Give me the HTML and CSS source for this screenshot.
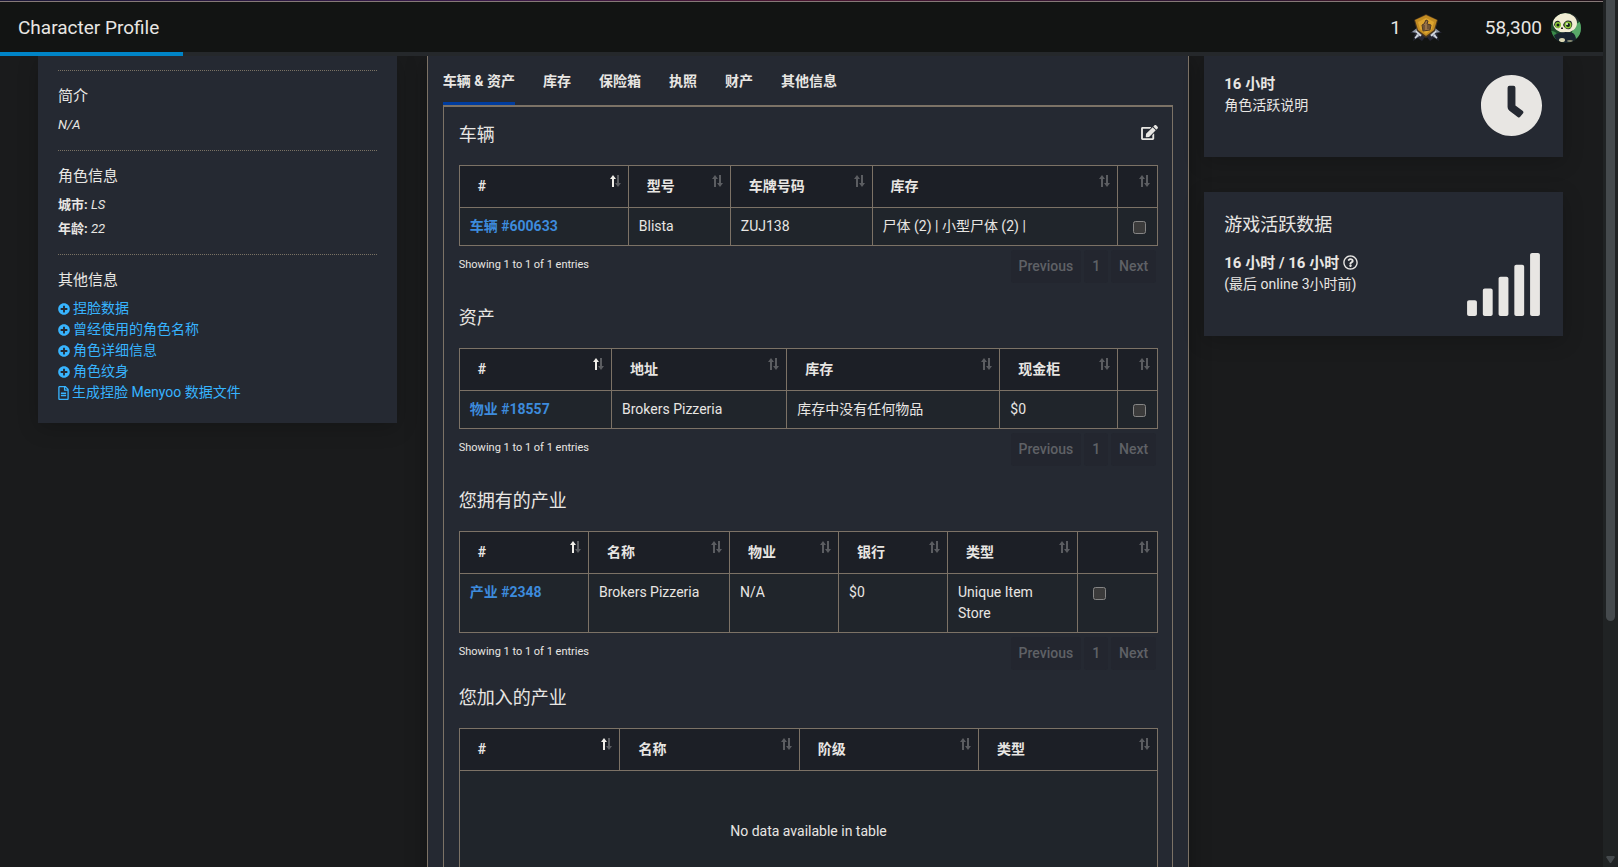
FILE: index.html
```html
<!DOCTYPE html>
<html lang="zh-CN">
<head>
    <meta charset="UTF-8">
    <meta name="viewport" content="width=device-width, initial-scale=1.0">
    <title>Character Profile</title>
    <link rel="stylesheet" href="styles.css">
</head>
<body>
    <!-- shared icons -->
    <svg class="sprite" aria-hidden="true">
        <symbol id="i-plus" viewBox="0 0 512 512"><path d="M256 8C119 8 8 119 8 256s111 248 248 248 248-111 248-248S393 8 256 8zm144 276c0 6.600-5.400 12-12 12h-92v92c0 6.600-5.400 12-12 12h-56c-6.600 0-12-5.400-12-12v-92h-92c-6.600 0-12-5.400-12-12v-56c0-6.600 5.400-12 12-12h92v-92c0-6.600 5.400-12 12-12h56c6.600 0 12 5.400 12 12v92h92c6.600 0 12 5.400 12 12v56z"/></symbol>
        <symbol id="i-sort" viewBox="0 0 11 12">
            <path class="up" d="M3 0 L6 4 H4 V12 H2 V4 H0 Z"/>
            <path class="down" d="M8 12 L5 8 H7 V0 H9 V8 H11 Z"/>
        </symbol>
        <symbol id="i-sort-asc" viewBox="0 0 11 12">
            <path fill="#5b5d61" d="M8 12 L5 8 H7 V0 H9 V8 H11 Z"/>
            <path fill="#f0eee9" d="M3 0 L6 4 H4 V12 H2 V4 H0 Z"/>
        </symbol>
    </svg>

    <div class="page">
        <div class="strip"></div>
        <header class="topbar">
            <h1>Character Profile</h1>
            <div class="balance">
                <span>1</span>
                <svg class="badge" viewBox="0 0 34 28" aria-hidden="true">
                    <path d="M9 13 L1 19 L6 19 L4 27 L9 24 L13 27 L17 22 L21 27 L25 24 L30 27 L28 19 L33 19 L25 13 Z" fill="#262735"/>
                    <path d="M8 14 L3 18 L8 19 L6 25 L14 20 Z M26 14 L31 18 L26 19 L28 25 L20 20 Z" fill="#8e96a4"/>
                    <path d="M7 17 L12 22 M27 17 L22 22 M6 24 L9 21 M28 24 L25 21" stroke="#d5dae2" stroke-width="1.500"/>
                    <path d="M17 0 L29 6 L26 17 L17 24 L8 17 L5 6 Z" fill="#49351f"/>
                    <path d="M17 1 L28 6 L25 16 L17 22 L9 16 L6 6 Z" fill="#c18b22"/>
                    <path d="M17 4 L25 8 L23 15 L17 20 L11 15 L9 8 Z" fill="#dda52f"/>
                    <path d="M13 11 L15 10 L17 6 L19 7 L18 10 L22 11 L21 16 L14 17 Z" fill="#9a7448" stroke="#4d3825"/>
                    <path d="M15 11 V16 M18 12 H21 M18 14 H21" stroke="#4d3825"/>
                </svg>
                <span class="points">58,300</span>
                <svg class="avatar" viewBox="0 0 30 30" aria-hidden="true">
                    <defs><clipPath id="round"><circle cx="15" cy="15" r="15"/></clipPath></defs>
                    <g clip-path="url(#round)">
                        <rect width="30" height="30" fill="#1d4a2c"/>
                        <path d="M20 25 Q21 12 30 8 V26 Z" fill="#58a968"/>
                        <path d="M0 18 Q5 17 7 24 L4 28 Z" fill="#398849"/>
                        <circle cx="24" cy="4" r="5" fill="#24262a"/>
                        <circle cx="4" cy="5" r="4" fill="#24262a"/>
                        <ellipse cx="14" cy="10" rx="12" ry="10" fill="#f1edd3"/>
                        <path d="M3 12 Q4 7 8 8 Q11 10 8 15 Q5 16 3 12 Z M12 12 Q14 6 20 8 Q23 12 19 16 Q14 17 12 12 Z" fill="#20282a"/>
                        <circle cx="7" cy="12" r="3" fill="#8cc936"/>
                        <circle cx="17" cy="12" r="3.500" fill="#8cc936"/>
                        <circle cx="7" cy="12" r="1.500" fill="#12201a"/>
                        <circle cx="17" cy="12" r="2" fill="#12201a"/>
                        <circle cx="16" cy="11" r="1" fill="#f5ffe0"/>
                        <path d="M10 15 H12 L11 16 Z" stroke="#222"/>
                        <path d="M3 22 Q12 17 22 20 Q27 24 23 30 H6 Z" fill="#19232f"/>
                        <ellipse cx="11" cy="27" rx="3" ry="2" fill="#d9d5b3"/>
                        <ellipse cx="19" cy="28" rx="3" ry="1" fill="#8a8d74"/>
                    </g>
                </svg>
            </div>
        </header>
        <div class="progress"><div class="progress-value"></div></div>

        <main class="columns">
            <aside class="side">
                <div class="card profile">
                    <div class="block">
                        <h5>简介</h5>
                        <p><em>N/A</em></p>
                    </div>
                    <div class="block">
                        <h5>角色信息</h5>
                        <p><b>城市:</b> <em>LS</em></p>
                        <p><b>年龄:</b> <em>22</em></p>
                    </div>
                    <div class="block">
                        <h5>其他信息</h5>
                        <ul class="links">
                            <li><a href="#"><svg class="ico-plus"><use href="#i-plus"/></svg>捏脸数据</a></li>
                            <li><a href="#"><svg class="ico-plus"><use href="#i-plus"/></svg>曾经使用的角色名称</a></li>
                            <li><a href="#"><svg class="ico-plus"><use href="#i-plus"/></svg>角色详细信息</a></li>
                            <li><a href="#"><svg class="ico-plus"><use href="#i-plus"/></svg>角色纹身</a></li>
                            <li><a href="#"><svg class="ico-file" viewBox="0 0 384 512"><path d="M288 248v28c0 6.600-5.400 12-12 12H108c-6.600 0-12-5.400-12-12v-28c0-6.600 5.400-12 12-12h168c6.600 0 12 5.400 12 12zm-12 72H108c-6.600 0-12 5.400-12 12v28c0 6.600 5.400 12 12 12h168c6.600 0 12-5.400 12-12v-28c0-6.600-5.400-12-12-12zm108-188.100V464c0 26.500-21.500 48-48 48H48c-26.500 0-48-21.500-48-48V48C0 21.500 21.500 0 48 0h204.100C264.800 0 277 5.100 286 14.100L369.900 98c9 8.900 14.100 21.200 14.100 33.900zm-128-80V128h76.100L256 51.900zM336 464V176H232c-13.300 0-24-10.700-24-24V48H48v416h288z"/></svg>生成捏脸 Menyoo 数据文件</a></li>
                        </ul>
                    </div>
                </div>
            </aside>

            <section class="center">
                <nav class="tabs">
                    <a class="active" href="#">车辆 &amp; 资产</a>
                    <a href="#">库存</a>
                    <a href="#">保险箱</a>
                    <a href="#">执照</a>
                    <a href="#">财产</a>
                    <a href="#">其他信息</a>
                </nav>
                <div class="tab-content">
                    <div class="group">
                        <div class="group-head">
                            <h4>车辆</h4>
                            <button class="edit" type="button" aria-label="编辑">
                                <svg viewBox="0 0 576 512"><path d="M402.600 83.200l90.200 90.200c3.800 3.800 3.800 10 0 13.800L274.400 405.600l-92.800 10.300c-12.400 1.400-22.900-9.100-21.500-21.500l10.300-92.800L388.800 83.200c3.800-3.800 10-3.800 13.800 0zm162-22.900l-48.800-48.800c-15.200-15.200-39.900-15.200-55.200 0l-35.400 35.400c-3.800 3.800-3.800 10 0 13.800l90.200 90.200c3.800 3.800 10 3.800 13.800 0l35.400-35.400c15.200-15.300 15.200-40 0-55.200zM384 346.200V448H64V128h229.800c3.200 0 6.200-1.300 8.500-3.500l40-40c7.600-7.600 2.200-20.500-8.500-20.500H48C21.500 64 0 85.500 0 112v352c0 26.500 21.500 48 48 48h352c26.500 0 48-21.500 48-48V306.200c0-10.700-12.900-16-20.500-8.500l-40 40c-2.200 2.300-3.500 5.300-3.500 8.500z"/></svg>
                            </button>
                        </div>
                        <table class="data vehicles">
                            <thead>
                                <tr>
                                    <th><button class="sort" type="button">#<svg><use href="#i-sort-asc"/></svg></button></th>
                                    <th><button class="sort" type="button">型号<svg><use href="#i-sort"/></svg></button></th>
                                    <th><button class="sort" type="button">车牌号码<svg><use href="#i-sort"/></svg></button></th>
                                    <th><button class="sort" type="button">库存<svg><use href="#i-sort"/></svg></button></th>
                                    <th><button class="sort" type="button" aria-label="选择"><svg><use href="#i-sort"/></svg></button></th>
                                </tr>
                            </thead>
                            <tbody>
                                <tr>
                                    <td><a href="#">车辆 #600633</a></td>
                                    <td>Blista</td>
                                    <td>ZUJ138</td>
                                    <td>尸体 (2) | 小型尸体 (2) |</td>
                                    <td><input type="checkbox" aria-label="车辆 #600633"></td>
                                </tr>
                            </tbody>
                        </table>
                        <div class="table-foot">
                            <span>Showing 1 to 1 of 1 entries</span>
                            <div class="pager">
                                <button type="button">Previous</button>
                                <button type="button">1</button>
                                <button type="button">Next</button>
                            </div>
                        </div>
                    </div>

                    <div class="group">
                        <div class="group-head"><h4>资产</h4></div>
                        <table class="data properties">
                            <thead>
                                <tr>
                                    <th><button class="sort" type="button">#<svg><use href="#i-sort-asc"/></svg></button></th>
                                    <th><button class="sort" type="button">地址<svg><use href="#i-sort"/></svg></button></th>
                                    <th><button class="sort" type="button">库存<svg><use href="#i-sort"/></svg></button></th>
                                    <th><button class="sort" type="button">现金柜<svg><use href="#i-sort"/></svg></button></th>
                                    <th><button class="sort" type="button" aria-label="选择"><svg><use href="#i-sort"/></svg></button></th>
                                </tr>
                            </thead>
                            <tbody>
                                <tr>
                                    <td><a href="#">物业 #18557</a></td>
                                    <td>Brokers Pizzeria</td>
                                    <td>库存中没有任何物品</td>
                                    <td>$0</td>
                                    <td><input type="checkbox" aria-label="物业 #18557"></td>
                                </tr>
                            </tbody>
                        </table>
                        <div class="table-foot">
                            <span>Showing 1 to 1 of 1 entries</span>
                            <div class="pager">
                                <button type="button">Previous</button>
                                <button type="button">1</button>
                                <button type="button">Next</button>
                            </div>
                        </div>
                    </div>

                    <div class="group group-owned">
                        <div class="group-head"><h4>您拥有的产业</h4></div>
                        <table class="data owned">
                            <thead>
                                <tr>
                                    <th><button class="sort" type="button">#<svg><use href="#i-sort-asc"/></svg></button></th>
                                    <th><button class="sort" type="button">名称<svg><use href="#i-sort"/></svg></button></th>
                                    <th><button class="sort" type="button">物业<svg><use href="#i-sort"/></svg></button></th>
                                    <th><button class="sort" type="button">银行<svg><use href="#i-sort"/></svg></button></th>
                                    <th><button class="sort" type="button">类型<svg><use href="#i-sort"/></svg></button></th>
                                    <th><button class="sort" type="button" aria-label="选择"><svg><use href="#i-sort"/></svg></button></th>
                                </tr>
                            </thead>
                            <tbody>
                                <tr>
                                    <td><a href="#">产业 #2348</a></td>
                                    <td>Brokers Pizzeria</td>
                                    <td>N/A</td>
                                    <td>$0</td>
                                    <td>Unique Item Store</td>
                                    <td><input type="checkbox" aria-label="产业 #2348"></td>
                                </tr>
                            </tbody>
                        </table>
                        <div class="table-foot">
                            <span>Showing 1 to 1 of 1 entries</span>
                            <div class="pager">
                                <button type="button">Previous</button>
                                <button type="button">1</button>
                                <button type="button">Next</button>
                            </div>
                        </div>
                    </div>

                    <div class="group">
                        <div class="group-head"><h4>您加入的产业</h4></div>
                        <table class="data joined">
                            <thead>
                                <tr>
                                    <th><button class="sort" type="button">#<svg><use href="#i-sort-asc"/></svg></button></th>
                                    <th><button class="sort" type="button">名称<svg><use href="#i-sort"/></svg></button></th>
                                    <th><button class="sort" type="button">阶级<svg><use href="#i-sort"/></svg></button></th>
                                    <th><button class="sort" type="button">类型<svg><use href="#i-sort"/></svg></button></th>
                                </tr>
                            </thead>
                            <tbody>
                                <tr><td class="empty" colspan="4">No data available in table</td></tr>
                            </tbody>
                        </table>
                    </div>
                </div>
            </section>

            <aside class="side">
                <div class="card stat stat-hours">
                    <div>
                        <strong>16 小时</strong>
                        <p>角色活跃说明</p>
                    </div>
                    <svg class="ico-clock" viewBox="0 0 512 512"><path d="M256,8C119,8,8,119,8,256S119,504,256,504,504,393,504,256,393,8,256,8Zm92.490,313h0l-20,25a16,16,0,0,1-22.490,2.500h0l-67-49.720a40,40,0,0,1-15-31.230V112a16,16,0,0,1,16-16h32a16,16,0,0,1,16,16V256l58,42.500A16,16,0,0,1,348.490,321Z"/></svg>
                </div>
                <div class="card">
                    <h4>游戏活跃数据</h4>
                    <div class="stat">
                        <div>
                            <strong>16 小时 / 16 小时 <svg class="ico-help" viewBox="0 0 512 512"><path d="M256 8C119 8 8 119 8 256c0 137 111 248 248 248s248-111 248-248C504 119 393 8 256 8zm0 448c-110.500 0-200-89.400-200-200 0-110.500 89.500-200 200-200 110.500 0 200 89.500 200 200 0 110.500-89.400 200-200 200zm107.200-255.200c0 67-72.400 68-72.400 92.900V300c0 6.600-5.400 12-12 12h-45.600c-6.600 0-12-5.400-12-12v-8.700c0-35.700 27.100-50 47.600-61.500 17.600-9.800 28.300-16.500 28.300-29.600 0-17.200-22-28.700-39.800-28.700-23.200 0-33.900 11-48.900 30-4.100 5.100-11.500 6.100-16.700 2.100l-27.800-21.100c-5.100-3.900-6.300-11.100-2.600-16.400C184.800 131.500 214.900 112 261.800 112c49.100 0 101.400 38.300 101.400 88.800zM298 368c0 23.200-18.800 42-42 42s-42-18.800-42-42 18.800-42 42-42 42 18.800 42 42z"/></svg></strong>
                            <p>(最后 online 3小时前)</p>
                        </div>
                        <svg class="ico-signal" viewBox="0 0 640 512"><path d="M216 288h-48c-8.840 0-16 7.160-16 16v192c0 8.840 7.160 16 16 16h48c8.840 0 16-7.160 16-16V304c0-8.840-7.160-16-16-16zM88 384H40c-8.840 0-16 7.160-16 16v96c0 8.840 7.160 16 16 16h48c8.840 0 16-7.160 16-16v-96c0-8.840-7.160-16-16-16zm256-192h-48c-8.840 0-16 7.160-16 16v288c0 8.840 7.160 16 16 16h48c8.840 0 16-7.160 16-16V208c0-8.840-7.160-16-16-16zm128-96h-48c-8.840 0-16 7.160-16 16v384c0 8.840 7.160 16 16 16h48c8.840 0 16-7.160 16-16V112c0-8.840-7.160-16-16-16zM600 0h-48c-8.840 0-16 7.160-16 16v480c0 8.840 7.160 16 16 16h48c8.840 0 16-7.160 16-16V16c0-8.840-7.160-16-16-16z"/></svg>
                    </div>
                </div>
            </aside>
        </main>
    </div>

    <div class="scrollbar">
        <div class="thumb"></div>
        <svg viewBox="0 0 9 7"><path d="M1 0 H8 L9 1 L5 7 H4 L0 1 Z"/></svg>
    </div>
</body>
</html>
```
FILE: styles.css
```css
* {
    box-sizing: border-box;
}

body {
    margin: 0;
    display: flex;
    height: 100vh;
    overflow: hidden;
    background: #1a1b1c;
    color: #e8e6e3;
    font-family: Roboto, "Noto Sans CJK SC", sans-serif;
    font-size: 14px;
    line-height: 21px;
}

h1, h4, h5, p, ul {
    margin: 0;
    padding: 0;
    font-weight: 400;
}

a {
    color: #37b4ff;
    text-decoration: none;
}

button {
    border: 0;
    padding: 0;
    background: none;
    color: inherit;
    font: inherit;
    cursor: pointer;
}

svg {
    fill: currentColor;
}

.sprite {
    position: absolute;
    width: 0;
    height: 0;
}

.page {
    flex: 1;
    min-width: 0;
    display: flex;
    flex-direction: column;
}

/* top bar */
.strip {
    flex: none;
    height: 1px;
    background: linear-gradient(90deg, #1c1838, #3a1a4a 30%, #4a1530 50%, #2a1735 78%, #4a1520 88%, #1c1018);
}

.topbar {
    display: flex;
    flex: none;
    justify-content: space-between;
    align-items: center;
    height: 51px;
    padding: 0 22px 0 18px;
    border-top: 1px solid #857977;
    background: #121413;
    font-size: 19px;
}

.topbar h1 {
    font-size: 19px;
}

.balance {
    display: flex;
    align-items: center;
}

.badge {
    width: 34px;
    height: 28px;
    margin: 2px 42px 0 8px;
}

.avatar {
    width: 30px;
    height: 30px;
    margin: 2px 0 0 9px;
}

.progress {
    flex: none;
    height: 4px;
    background: #25282b;
}

.progress-value {
    width: 183px;
    height: 4px;
    background: #0084c7;
}

/* columns */
.columns {
    flex: 1;
    min-height: 0;
    overflow: hidden;
    display: grid;
    grid-template-columns: 1fr 2fr 1fr;
    padding: 0 25px 0 23px;
}

.side {
    padding: 0 15px;
}

.card {
    margin-bottom: 35px;
    padding: 20px;
    background: #252932;
    box-shadow: 0 5px 20px rgba(0, 0, 0, 0.2);
}

.card h4 {
    margin-bottom: 15px;
}

h4 {
    font-size: 18px;
    line-height: 26px;
}

.profile {
    padding-top: 14px;
}

.block {
    padding: 15px 0 13px;
    border-top: 1px dotted #7a7264;
}

.block:last-child {
    padding-bottom: 0;
}

.block h5 {
    margin-bottom: 7px;
    font-size: 15px;
    line-height: 20px;
}

.block p {
    font-size: 13px;
    line-height: 24px;
}

.links {
    padding-top: 1px;
    list-style: none;
}

.links a {
    display: flex;
    align-items: center;
    gap: 3px;
}

.ico-plus {
    width: 12px;
    height: 12px;
}

.ico-file {
    width: 11px;
    height: 14px;
}

.stat {
    display: flex;
    justify-content: space-between;
}

.stat strong {
    font-size: 15px;
}

.stat-hours {
    padding-top: 18px;
}

.ico-clock {
    width: 63px;
    height: 63px;
}

.ico-signal {
    width: 79px;
    height: 63px;
}

.ico-help {
    width: 15px;
    height: 15px;
    vertical-align: -2px;
}

/* center panel */
.center {
    margin-left: 15px;
    padding: 0 15px;
    border: solid #7c7266;
    border-width: 0 1px;
    background: #252932;
    box-shadow: 0 5px 20px rgba(0, 0, 0, 0.3);
}

.tabs {
    display: flex;
    gap: 28px;
    padding-top: 15px;
}

.tabs a {
    padding-bottom: 10px;
    border-bottom: 3px solid transparent;
    color: #e8e6e3;
    font-weight: 700;
}

.tabs .active {
    border-color: #003c9e;
}

.tab-content {
    padding: 15px 14px 15px 15px;
    border: 1px solid #7c7266;
    border-top-width: 2px;
}

.group {
    margin-bottom: 22px;
}

.group-owned {
    margin-bottom: 15px;
}

.group-head {
    display: flex;
    justify-content: space-between;
    height: 43px;
}

.edit {
    height: 20px;
}

.edit svg {
    display: block;
    width: 17px;
    height: 15px;
}

.data {
    width: 100%;
    table-layout: fixed;
    border-collapse: collapse;
}

.data th, .data td {
    border: 1px solid #7c7266;
    text-align: left;
    vertical-align: top;
}

.data th {
    padding: 9px 7px 9px 18px;
    background: #1c1f26;
}

.data td {
    padding: 8px 10px;
    background: #20252b;
}

.data td a {
    color: #3d8bdc;
    font-weight: 700;
}

.data .empty {
    padding: 50px 10px;
    text-align: center;
}

.sort {
    display: flex;
    width: 100%;
    height: 23px;
    font-weight: 700;
    line-height: 23px;
}

.sort svg {
    flex: none;
    width: 11px;
    height: 12px;
    margin-left: auto;
    fill: #5b5d61;
}

.vehicles th:nth-child(1) { width: 24.2%; }
.vehicles th:nth-child(2) { width: 14.6%; }
.vehicles th:nth-child(3) { width: 20.3%; }
.vehicles th:nth-child(4) { width: 35.1%; }

.properties th:nth-child(1) { width: 21.8%; }
.properties th:nth-child(2) { width: 25.1%; }
.properties th:nth-child(3) { width: 30.5%; }
.properties th:nth-child(4) { width: 16.8%; }

.owned th:nth-child(1) { width: 18.5%; }
.owned th:nth-child(2) { width: 20.2%; }
.owned th:nth-child(3) { width: 15.6%; }
.owned th:nth-child(4) { width: 15.6%; }
.owned th:nth-child(5) { width: 18.6%; }

.joined th:nth-child(1) { width: 23%; }

input[type="checkbox"] {
    color-scheme: dark;
    width: 13px;
    height: 13px;
    margin: 3px 3px 3px 5px;
    vertical-align: middle;
}

.table-foot {
    display: flex;
    justify-content: space-between;
    padding: 4px 2px 0 0;
    font-size: 11px;
}

.table-foot span {
    padding-top: 4px;
}

.pager {
    display: flex;
    gap: 3px;
    font-size: 14px;
    font-weight: 500;
}

.pager button {
    height: 33px;
    padding: 0 8px;
    border-radius: 3px;
    background: #23262f;
    color: #5f6166;
}

/* page scrollbar */
.scrollbar {
    display: flex;
    flex: none;
    flex-direction: column;
    align-items: center;
    justify-content: space-between;
    width: 15px;
    padding-bottom: 4px;
    background: #202324;
}

.thumb {
    width: 9px;
    height: 72%;
    border-radius: 0 0 5px 5px;
    background: #454a4d;
}

.scrollbar svg {
    width: 9px;
    height: 7px;
    fill: #454a4d;
}
```
